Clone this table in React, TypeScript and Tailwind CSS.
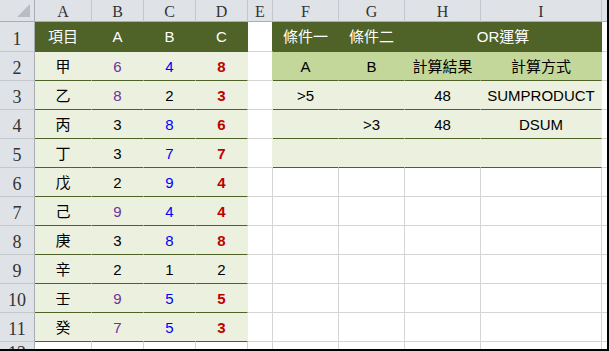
import type { ReactNode } from "react";

// cell looks, one full class string per kind
const HEAD =
  "bg-[#dfe3e8] border-r border-b border-r-[#c3c8ce] border-b-[#a9aeb5] text-[#333] font-['Liberation_Serif',serif] text-[16px] pt-[3px]";
const ROWNUM =
  "bg-[#dfe3e8] border-r border-b border-r-[#a9aeb5] border-b-[#c3c8ce] text-[#333] font-['Liberation_Serif',serif] text-[18px] leading-none !items-end";
const DARK = "bg-[#4f6228] border-r border-b border-r-[#4f6228] border-b-[#4f6228] text-white pt-[2px]";
const MID = "bg-[#c4d79b] border-r border-b border-r-[#c4d79b] border-b-[#4f6228] text-black pt-[2px]";
const LIGHT = "bg-[#ebf1de] border-r border-b border-r-[#ebf1de] border-b-[#4f6228] text-black pt-[2px]";
const WHITE = "bg-white border-r border-b border-r-[#d4d4d4] border-b-[#d4d4d4]";
const J = "bg-white border-b border-b-[#d4d4d4]";

const E_RIGHT = [
  "bg-white border-r border-b border-b-[#d4d4d4] border-r-[#4f6228]",
  "bg-white border-r border-b border-b-[#d4d4d4] border-r-[#c4d79b]",
  "bg-white border-r border-b border-b-[#d4d4d4] border-r-[#ebf1de]",
  "bg-white border-r border-b border-b-[#d4d4d4] border-r-[#ebf1de]",
  "bg-white border-r border-b border-b-[#d4d4d4] border-r-[#ebf1de]",
];

const data: [string, number, number, number][] = [
  ["甲", 6, 4, 8],
  ["乙", 8, 2, 3],
  ["丙", 3, 8, 6],
  ["丁", 3, 7, 7],
  ["戊", 2, 9, 4],
  ["己", 9, 4, 4],
  ["庚", 3, 8, 8],
  ["辛", 2, 1, 2],
  ["壬", 9, 5, 5],
  ["癸", 7, 5, 3],
];

// right block, rows 2..5 (row 1 is the dark title row)
const right: string[][] = [
  ["A", "B", "計算結果", "計算方式"],
  [">5", "", "48", "SUMPRODUCT"],
  ["", ">3", "48", "DSUM"],
  ["", "", "", ""],
];

const Cell = ({ cls, children, span }: { cls: string; children?: ReactNode; span?: boolean }) => (
  <div className={`flex items-center justify-center overflow-hidden whitespace-nowrap ${span ? "col-span-2" : ""} ${cls}`}>
    {children}
  </div>
);

export default function App() {
  return (
    <div className="w-[609px] h-[351px] overflow-hidden bg-white border-r-2 border-b-2 border-black font-['Liberation_Sans','Noto_Sans_CJK_TC',sans-serif] text-[15px]">
      <div className="grid grid-cols-[35px_57px_52px_52px_52px_25px_66px_66px_76px_121px_5px] grid-rows-[22px_30px_repeat(10,29px)_7px]">
        {/* column letters */}
        <div className="flex items-end justify-end pr-[4px] pb-[4px] bg-[#dfe3e8] border-r border-b border-r-[#a9aeb5] border-b-[#a9aeb5]">
          <svg width="13" height="13" viewBox="0 0 13 13">
            <polygon points="13,0 13,13 0,13" fill="#b9bdc3" />
          </svg>
        </div>
        {["A", "B", "C", "D", "E", "F", "G", "H", "I"].map((l) => (
          <Cell key={l} cls={HEAD}>{l}</Cell>
        ))}
        <div className="bg-[#dfe3e8] border-b border-b-[#a9aeb5]" />

        {/* row 1: titles */}
        <Cell cls={ROWNUM}><span className="pb-[3px]">1</span></Cell>
        <Cell cls={DARK}>項目</Cell>
        <Cell cls={DARK}>A</Cell>
        <Cell cls={DARK}>B</Cell>
        <Cell cls={DARK}>C</Cell>
        <Cell cls={E_RIGHT[0]} />
        <Cell cls={DARK}>條件一</Cell>
        <Cell cls={DARK}>條件二</Cell>
        <Cell cls={DARK} span>OR運算</Cell>
        <Cell cls={J} />

        {data.map(([name, a, b, c], i) => {
          const r = i + 2;
          const hit = a > 5 || b > 3;
          return [
            <Cell key={`n${r}`} cls={ROWNUM}><span className="pb-[3px]">{r}</span></Cell>,
            <Cell key={`a${r}`} cls={LIGHT}>{name}</Cell>,
            <Cell key={`b${r}`} cls={LIGHT}>
              <span className={a > 5 ? "text-[#7030a0]" : "text-black"}>{a}</span>
            </Cell>,
            <Cell key={`c${r}`} cls={LIGHT}>
              <span className={b > 3 ? "text-[#0000ff]" : "text-black"}>{b}</span>
            </Cell>,
            <Cell key={`d${r}`} cls={LIGHT}>
              <span className={hit ? "text-[#c00000] font-bold" : "text-black"}>{c}</span>
            </Cell>,
            <Cell key={`e${r}`} cls={i < 4 ? E_RIGHT[i + 1] : WHITE} />,
            ...(i < 4
              ? right[i].map((t, k) => (
                  <Cell key={`r${r}${k}`} cls={i === 0 ? MID : LIGHT}>{t}</Cell>
                ))
              : [0, 1, 2, 3].map((k) => <Cell key={`r${r}${k}`} cls={WHITE} />)),
            <Cell key={`j${r}`} cls={J} />,
          ];
        })}

        {/* row 12, cut off by the window */}
        <div className="flex justify-center pt-[2px] overflow-hidden bg-[#dfe3e8] border-r border-r-[#a9aeb5] text-[#333] font-['Liberation_Serif',serif] text-[18px] leading-none">
          12
        </div>
        {Array.from({ length: 9 }).map((_, k) => (
          <div key={k} className="bg-white border-r border-r-[#d4d4d4]" />
        ))}
        <div className="bg-white" />
      </div>
    </div>
  );
}
